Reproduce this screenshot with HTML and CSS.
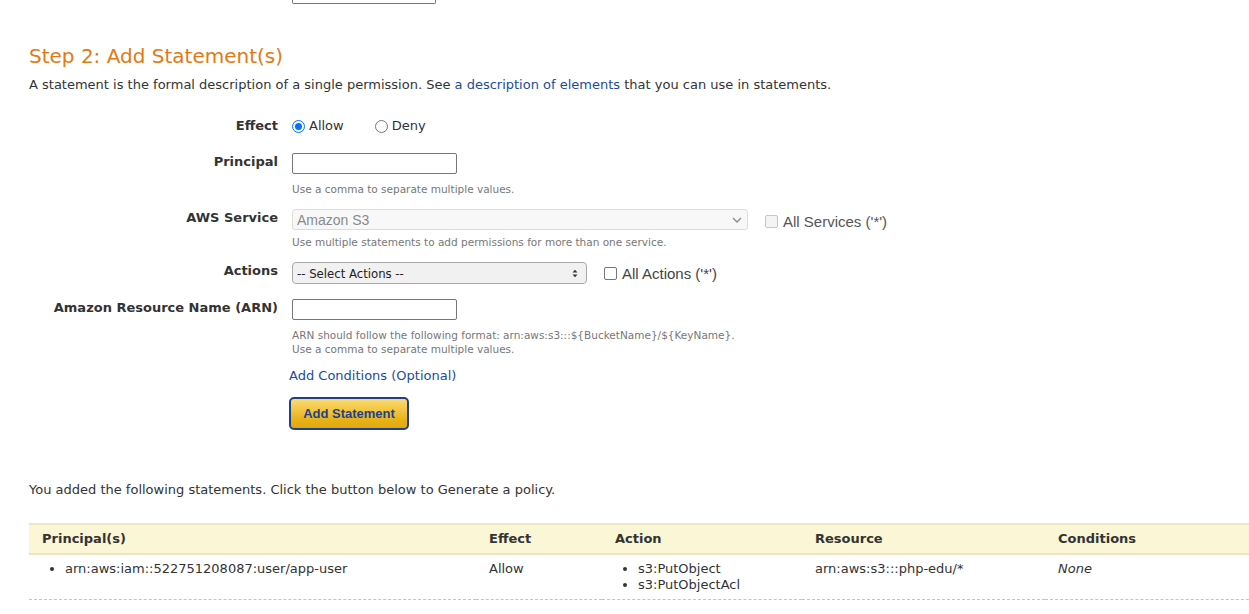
FILE: index.html
```html
<!DOCTYPE html>
<html>
<head>
<meta charset="utf-8">
<link rel="stylesheet" href="styles.css">
</head>
<body>
<div class="page">
  <div class="top-stub"><div class="stub-input"></div></div>

  <h2 class="step-title">Step 2: Add Statement(s)</h2>
  <p class="intro">A statement is the formal description of a single permission. See <a href="#" class="link">a description of elements</a> that you can use in statements.</p>

  <div class="form">
    <div class="row row-effect">
      <div class="label">Effect</div>
      <div class="field">
        <div class="radios">
          <label class="radio-item"><span class="radio checked"></span>Allow</label>
          <label class="radio-item deny"><span class="radio"></span>Deny</label>
        </div>
      </div>
    </div>

    <div class="row row-principal">
      <div class="label">Principal</div>
      <div class="field">
        <div class="text-input"></div>
        <div class="hint hint-principal">Use a comma to separate multiple values.</div>
      </div>
    </div>

    <div class="row row-service">
      <div class="label">AWS Service</div>
      <div class="field">
        <div class="inline">
          <div class="select disabled">
            <span>Amazon S3</span>
            <svg class="chev" width="10" height="6" viewBox="0 0 10 6"><path d="M1 1 L5 5 L9 1" fill="none" stroke="#8a8a8a" stroke-width="1.3"/></svg>
          </div>
          <label class="check-item disabled"><span class="checkbox"></span><span>All Services (&#39;*&#39;)</span></label>
        </div>
        <div class="hint hint-service">Use multiple statements to add permissions for more than one service.</div>
      </div>
    </div>

    <div class="row row-actions">
      <div class="label">Actions</div>
      <div class="field">
        <div class="inline">
          <div class="select actions">
            <span>-- Select Actions --</span>
            <svg class="updown" width="6" height="9" viewBox="0 0 6 9"><path d="M0.5 3.5 L3 0.8 L5.5 3.5 Z M0.5 5.5 L3 8.2 L5.5 5.5 Z" fill="#333"/></svg>
          </div>
          <label class="check-item"><span class="checkbox"></span><span>All Actions (&#39;*&#39;)</span></label>
        </div>
      </div>
    </div>

    <div class="row row-arn">
      <div class="label">Amazon Resource Name (ARN)</div>
      <div class="field">
        <div class="text-input"></div>
        <div class="hint hint-arn">ARN should follow the following format: arn:aws:s3:::${BucketName}/${KeyName}.<br>Use a comma to separate multiple values.</div>
      </div>
    </div>

    <div class="actions-block">
      <a href="#" class="link cond-link">Add Conditions (Optional)</a>
      <button class="btn-add">Add Statement</button>
    </div>
  </div>

  <p class="added">You added the following statements. Click the button below to Generate a policy.</p>

  <table class="stmts">
    <thead>
      <tr>
        <th class="c-principal">Principal(s)</th>
        <th class="c-effect">Effect</th>
        <th class="c-action">Action</th>
        <th class="c-resource">Resource</th>
        <th class="c-cond">Conditions</th>
      </tr>
    </thead>
    <tbody>
      <tr>
        <td><ul class="list"><li>arn:aws:iam::522751208087:user/app-user</li></ul></td>
        <td>Allow</td>
        <td><ul class="list"><li>s3:PutObject</li><li>s3:PutObjectAcl</li></ul></td>
        <td>arn:aws:s3:::php-edu/*</td>
        <td><em>None</em></td>
      </tr>
    </tbody>
  </table>
</div>
</body>
</html>
```

FILE: styles.css
```css
* { box-sizing: border-box; }
html, body { margin: 0; padding: 0; background: #fff; }
body {
  font-family: "DejaVu Sans", Verdana, sans-serif;
  color: #333;
  font-size: 13px;
  overflow: hidden;
}
.page {
  padding-left: 29px;
  width: 1249px;
  height: 614px;
  overflow: hidden;
}
.top-stub {
  height: 4px;
  padding-left: 263px;
}
.stub-input {
  width: 144px;
  height: 4px;
  border: 1px solid #767676;
  border-top: none;
  border-radius: 0 0 2px 2px;
}
.step-title {
  margin: 38px 0 0 0;
  font-weight: normal;
  font-size: 20px;
  line-height: 28px;
  color: #e47911;
}
.intro {
  margin: 7px 0 0 0;
  line-height: 16px;
}
.link { color: #1a4c9c; text-decoration: none; }

.form { margin-top: 24px; }
.row {
  display: flex;
  align-items: flex-start;
}
.label {
  width: 249px;
  text-align: right;
  font-weight: bold;
  line-height: 16px;
  padding-top: 1px;
  color: #333;
}
.field {
  margin-left: 14px;
  display: flex;
  flex-direction: column;
}
.row-effect { height: 36px; }
.row-effect .label { padding-top: 1px; }
.radios { display: flex; align-items: center; height: 18px; }
.radio-item { display: flex; align-items: center; line-height: 16px; }
.radio-item.deny { margin-left: 31px; }
.radio {
  width: 13px; height: 13px; border-radius: 50%;
  border: 1px solid #767676;
  margin-right: 4px;
  display: inline-block;
  position: relative;
}
.radio.checked { border: 1px solid #0075ff; }
.radio.checked::after {
  content: ""; position: absolute; left: 2px; top: 2px;
  width: 7px; height: 7px; border-radius: 50%; background: #0075ff;
}
.text-input {
  width: 165px; height: 21px;
  border: 1px solid #767676;
  border-radius: 2px;
  background: #fff;
}
.hint {
  font-size: 10.5px;
  line-height: 14px;
  color: #777;
}
.hint-principal { margin-top: 8px; margin-bottom: 13px; }
.hint-service { margin-top: 5px; margin-bottom: 13px; }
.row-actions { margin-bottom: 15px; }
.hint-arn { margin-top: 8px; }
.inline { display: flex; align-items: center; }
.select {
  height: 21px;
  border: 1px solid #c4c4c4;
  border-radius: 3px;
  display: flex;
  align-items: center;
  justify-content: space-between;
  padding: 0 5px 0 4px;
  font-family: "Liberation Sans", Arial, sans-serif;
  font-size: 14px;
}
.select.disabled {
  width: 456px;
  background: #f8f8f8;
  color: #8a8a8a;
  border-color: #dcdcdc;
}
.select.actions {
  width: 295px;
  height: 22px;
  background: #f1f1f1;
  border-color: #a9a9a9;
  border-radius: 4px;
  color: #222;
  font-family: "DejaVu Sans Condensed", "DejaVu Sans", sans-serif;
  font-size: 13px;
  padding-right: 8px;
}
.check-item {
  display: flex; align-items: center;
  margin-left: 17px;
  font-family: "Liberation Sans", Arial, sans-serif;
  font-size: 15px;
  color: #444;
}
.check-item.disabled { margin-top: 4px; color: #555; }
.checkbox {
  width: 13px; height: 13px; border: 1px solid #767676; border-radius: 2px;
  margin-right: 5px; display: inline-block; background: #fff;
}
.check-item.disabled .checkbox { border-color: #c6c6c6; background: #f4f4f4; }
.actions-block {
  margin-left: 260px;
  display: flex;
  flex-direction: column;
  align-items: flex-start;
  margin-top: 12px;
}
.cond-link { font-size: 13px; line-height: 16px; }
.btn-add {
  margin-top: 13px;
  width: 120px; height: 33px;
  border: 2px solid #1f3f8a;
  border-radius: 5px;
  background: linear-gradient(#fbdc72, #e8b318 70%, #e0a80c);
  color: #1f3f8a;
  font-family: "Liberation Sans", Arial, sans-serif;
  font-weight: bold;
  font-size: 13px;
  padding: 0;
}
.added {
  margin: 52px 0 0 0;
  line-height: 16px;
}
.stmts {
  margin-top: 25px;
  width: 1240px;
  border-collapse: collapse;
  table-layout: fixed;
}
.stmts th {
  background: #faf6d6;
  border-top: 2px solid #ece7c2;
  border-bottom: 2px solid #ece7c2;
  text-align: left;
  font-weight: bold;
  height: 30px;
  padding: 0 0 1px 13px;
  color: #333;
}
.stmts td {
  vertical-align: top;
  padding: 6px 0 6px 13px;
  border-bottom: 1px dashed #c8c9a2;
  line-height: 16px;
}
.c-principal { width: 447px; }
.c-effect { width: 126px; }
.c-action { width: 200px; }
.c-resource { width: 243px; }
.list { margin: 0; padding-left: 23px; }
```
